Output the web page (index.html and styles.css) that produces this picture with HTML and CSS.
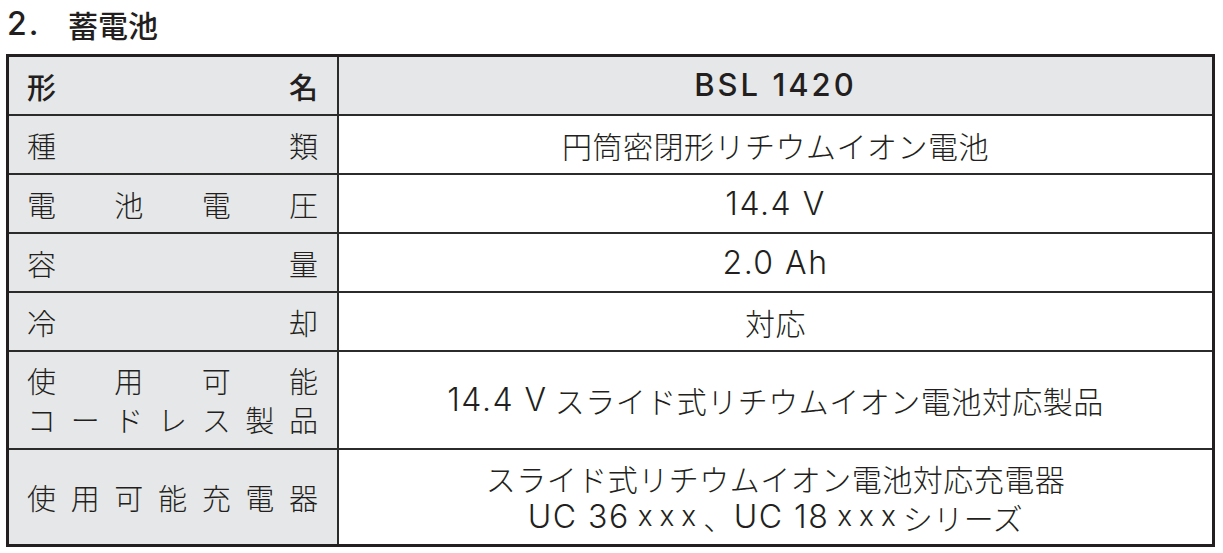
FILE: index.html
```html
<!DOCTYPE html>
<html lang="ja">
<head>
<meta charset="utf-8">
<link rel="stylesheet" href="styles.css">
</head>
<body>
<h2 class="title"><span class="num">2.</span><span>蓄電池</span></h2>
<div class="spec">
  <div class="row head">
    <div class="label"><span>形</span><span>名</span></div>
    <div class="value"><span class="lat model">BSL 1420</span></div>
  </div>
  <div class="row">
    <div class="label"><span>種</span><span>類</span></div>
    <div class="value">円筒密閉形リチウムイオン電池</div>
  </div>
  <div class="row">
    <div class="label"><span>電</span><span>池</span><span>電</span><span>圧</span></div>
    <div class="value"><span class="lat">14.4 V</span></div>
  </div>
  <div class="row">
    <div class="label"><span>容</span><span>量</span></div>
    <div class="value"><span class="lat">2.0 Ah</span></div>
  </div>
  <div class="row">
    <div class="label"><span>冷</span><span>却</span></div>
    <div class="value">対応</div>
  </div>
  <div class="row tall">
    <div class="label multi">
      <div class="line"><span>使</span><span>用</span><span>可</span><span>能</span></div>
      <div class="line"><span>コ</span><span>ー</span><span>ド</span><span>レ</span><span>ス</span><span>製</span><span>品</span></div>
    </div>
    <div class="value"><span class="lat">14.4 V</span>&nbsp;スライド式リチウムイオン電池対応製品</div>
  </div>
  <div class="row last">
    <div class="label"><span>使</span><span>用</span><span>可</span><span>能</span><span>充</span><span>電</span><span>器</span></div>
    <div class="value multi-value">
      <div class="vline">スライド式リチウムイオン電池対応充電器</div>
      <div class="vline"><span class="lat">UC 36</span><span class="lat xs">xxx</span>、<span class="lat">UC 18</span><span class="lat xs">xxx</span>シリーズ</div>
    </div>
  </div>
</div>
</body>
</html>
```
FILE: styles.css
```css
*, *::before, *::after {
  box-sizing: border-box;
}
html, body {
  margin: 0;
  padding: 0;
  background: #ffffff;
}
body {
  font-family: "Noto Sans CJK JP", "Noto Sans", sans-serif;
  color: #231f20;
}
.title {
  margin: 0;
  height: 54px;
  padding-left: 7px;
  font-size: 30px;
  font-weight: 500;
  line-height: 48px;
  display: flex;
}
.title .num {
  width: 61px;
  font-family: "Inter", sans-serif;
  font-weight: 500;
  font-size: 32px;
  letter-spacing: 2px;
}
.spec {
  margin-left: 6px;
  width: 1209px;
  border: 3px solid #231f20;
}
.row {
  display: grid;
  grid-template-columns: 330px 1fr;
  height: 59px;
  border-top: 2px solid #2b2b2b;
}
.row.head {
  border-top: none;
  height: 57px;
}
.row.tall {
  height: 98px;
}
.row.last {
  height: 96px;
}
.label {
  background: #e6e7e8;
  border-right: 2px solid #2b2b2b;
  display: flex;
  justify-content: space-between;
  align-items: center;
  padding: 0 19px 0 18px;
  font-size: 29px;
  font-weight: 300;
}
.label.multi {
  flex-direction: column;
  justify-content: center;
  align-items: stretch;
}
.label .line {
  display: flex;
  justify-content: space-between;
  line-height: 39px;
}
.value {
  display: flex;
  align-items: center;
  justify-content: center;
  font-size: 30px;
  font-weight: 300;
  letter-spacing: 0.5px;
  white-space: nowrap;
}
.multi-value {
  flex-direction: column;
  line-height: 39px;
}
.vline {
  height: 39px;
  display: flex;
  align-items: center;
  line-height: 1.2;
}
.lat {
  font-family: "Inter", "Noto Sans CJK JP", sans-serif;
  font-size: 32px;
  font-weight: 300;
  letter-spacing: 1.5px;
  line-height: 1.1;
}
.lat.xs {
  font-size: 28px;
  letter-spacing: 7px;
  margin-left: 8px;
}
.head .label {
  font-weight: 500;
}
.head .value {
  background: #e6e7e8;
}
.lat.model {
  font-weight: 500;
  font-size: 31px;
  letter-spacing: 3px;
}
```
